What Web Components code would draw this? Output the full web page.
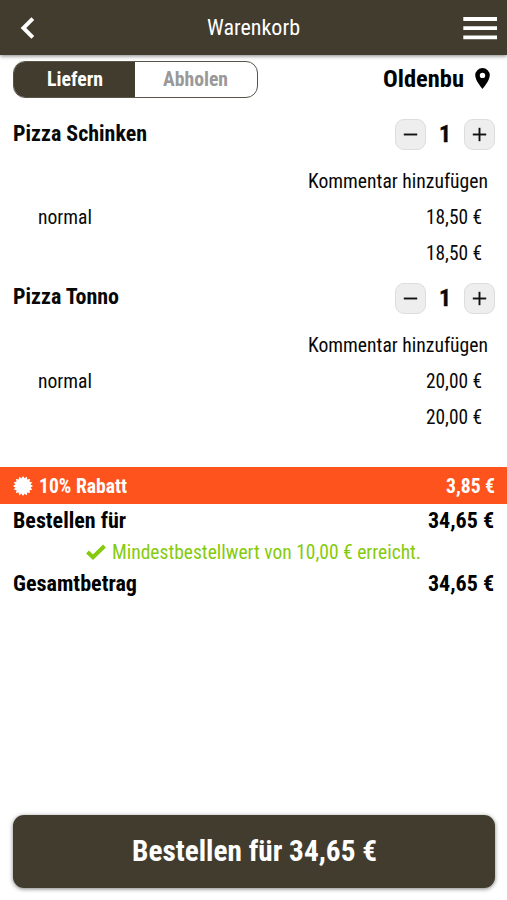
<!DOCTYPE html>
<html lang="de">
<head>
<meta charset="utf-8">
<title>Warenkorb</title>
<style>
html,body{margin:0;height:100%;background:#fff}
body{font-family:"Roboto Condensed",Roboto,"Liberation Sans",sans-serif;font-stretch:75%;color:#080808}
</style>
</head>
<body>
<cart-page></cart-page>
<script>
const define = (name, html, setup) => customElements.define(name, class extends HTMLElement {
  connectedCallback() {
    if (this.shadowRoot) return;
    const root = this.attachShadow({mode: 'open'});
    const t = document.createElement('template');
    t.innerHTML = html;
    root.append(t.content.cloneNode(true));
    if (setup) setup(this, root);
  }
});

/* Condensed label: w = set width, s = font size */
define('fit-text', `
<style>
:host{display:flex;flex:none;line-height:1.2;white-space:nowrap}
:host([b]){font-weight:700}
span{display:block;flex:none;transform-origin:0 50%}
</style><span><slot></slot></span>`, (el, root) => {
  const span = root.querySelector('span'), w = +el.getAttribute('w');
  el.style.fontSize = el.getAttribute('s') + 'px';
  el.style.width = w + 'px';
  const natural = span.getBoundingClientRect().width;
  if (natural) span.style.transform = 'scaleX(' + w / natural + ')';
});

define('app-header', `
<style>
:host{display:flex;flex:none;height:54.5px;box-sizing:border-box;padding:1px 10px 0 20px;background:#413c2e;color:#fff;align-items:center;justify-content:space-between;box-shadow:0 1px 4px rgba(0,0,0,.5)}
svg{display:block}
.title{padding-left:8px}
</style>
<svg width="16" height="24" viewBox="0 0 16 24"><path d="M12.8 2.6 3.4 12l9.4 9.4" fill="none" stroke="#fff" stroke-width="3.9"/></svg>
<div class="title"><fit-text w="93" s="22.5">Warenkorb</fit-text></div>
<svg width="34" height="24" viewBox="0 0 34 24"><path d="M.3 3h33.7M.3 12.2h33.7M.3 21.3h33.7" stroke="#fff" stroke-width="3.8"/></svg>`);

define('mode-switch', `
<style>
:host{display:flex;box-sizing:border-box;width:244.5px;height:37px;border:1px solid #58544a;border-radius:12px;overflow:hidden}
div{flex:1;display:flex;align-items:center;justify-content:center}
.on{background:#413c2e;color:#fff}.off{color:#999}
</style>
<div class="on"><fit-text b w="56" s="20">Liefern</fit-text></div><div class="off"><fit-text b w="65" s="20">Abholen</fit-text></div>`);

define('top-row', `
<style>
:host{display:flex;align-items:center;justify-content:space-between;padding:6px 17px 0 13px;height:37px}
.loc{display:flex;align-items:center;gap:11px;color:#000}
svg{display:block}
</style>
<mode-switch></mode-switch>
<div class="loc"><fit-text b w="81" s="24.5">Oldenbu</fit-text>
<svg width="15" height="21" viewBox="0 0 15 21"><path fill-rule="evenodd" d="M7.5 0A7.3 7.3 0 0 0 .2 7.3C.2 12.6 7.5 21 7.5 21s7.3-8.4 7.3-13.7A7.3 7.3 0 0 0 7.5 0Zm0 4.7a2.7 2.7 0 1 1 0 5.4 2.7 2.7 0 0 1 0-5.4Z"/></svg></div>`);

define('qty-button', `
<style>
:host{display:flex;box-sizing:border-box;width:31px;height:31px;border:1px solid #ddd;border-radius:9px;background:#eee;align-items:center;justify-content:center}
svg{display:block}
:host([minus]) .v{display:none}
</style>
<svg width="15" height="15" viewBox="0 0 15 15" stroke="#111" stroke-width="1.9"><path d="M.8 7.5h13.4"/><path class="v" d="M7.5 .8v13.4"/></svg>`);

define('cart-item', `
<style>
:host{display:flex;flex-direction:column;box-sizing:border-box;height:163.5px;padding:0 12px 0 13px}
div{display:flex;flex:none;height:36px;align-items:center;justify-content:space-between}
.qty{gap:13px;padding-right:.4px}
.comment{justify-content:flex-end;margin-top:10.5px;padding-right:7.4px}
.line{padding:0 12.6px 0 24.5px;margin-top:.4px}
.sum{justify-content:flex-end;padding-right:12.6px;height:35.4px}
</style>
<div class="head"><slot name="name"></slot><div class="qty"><qty-button minus></qty-button><fit-text b w="12" s="24" style="-webkit-text-stroke:.4px">1</fit-text><qty-button></qty-button></div></div>
<div class="comment"><fit-text w="180" s="20">Kommentar hinzufügen</fit-text></div>
<div class="line"><fit-text w="54" s="20">normal</fit-text><slot name="price"></slot></div>
<div class="sum"><slot name="sum"></slot></div>`);

define('discount-bar', `
<style>
:host{display:flex;height:37px;margin-top:23.5px;box-sizing:border-box;padding:1.5px 12.5px 0 13px;background:#ff531d;color:#fff;align-items:center;justify-content:space-between}
div{display:flex;align-items:center;gap:6px}
svg{display:block;margin-top:-1px}
</style>
<div><svg width="20" height="20" viewBox="-10 -10 20 20"><polygon fill="#fff"/></svg><fit-text b w="88" s="19.5">10% Rabatt</fit-text></div>
<fit-text b w="49" s="19.5">3,85 €</fit-text>`, (el, root) => {
  const pts = [];
  for (let i = 0; i < 32; i++) {
    const r = i % 2 ? 7.8 : 10, a = i * Math.PI / 16;
    pts.push((r * Math.sin(a)).toFixed(2) + ',' + (-r * Math.cos(a)).toFixed(2));
  }
  root.querySelector('polygon').setAttribute('points', pts.join(' '));
});

define('total-row', `
<style>:host{display:flex;height:31px;padding:0 12.8px 0 13px;align-items:center;justify-content:space-between;color:#000}</style>
<slot></slot><fit-text b w="66" s="22.5">34,65 €</fit-text>`);

define('minimum-note', `
<style>
:host{display:flex;height:31.5px;align-items:center;justify-content:center;gap:6px;color:#85cb0c}
svg{display:block}
</style>
<svg width="20" height="16" viewBox="0 0 20 16"><path d="M1.5 8 7 13.2 18.5 2" fill="none" stroke="#85cb0c" stroke-width="4"/></svg>
<fit-text w="309" s="20">Mindestbestellwert von 10,00 € erreicht.</fit-text>`);

define('order-button', `
<style>:host{display:flex;flex:none;box-sizing:border-box;height:73px;padding:1.5px 0 0 0;margin:auto 12px 12.5px 13px;border-radius:11px;background:#413c2e;color:#fff;align-items:center;justify-content:center;box-shadow:0 1px 4px rgba(0,0,0,.5)}</style>
<fit-text b w="245" s="29.5">Bestellen für 34,65 €</fit-text>`);

define('cart-page', `
<style>
:host{display:flex;flex-direction:column;height:900px;width:507px;overflow:hidden}
.items{padding-top:19px}
.totals{padding-top:1px}
</style>
<app-header></app-header>
<top-row></top-row>
<div class="items">
<cart-item><fit-text slot="name" b w="134" s="22.5" style="padding-bottom:3px">Pizza Schinken</fit-text><fit-text slot="price" w="56" s="20">18,50 €</fit-text><fit-text slot="sum" w="56" s="20">18,50 €</fit-text></cart-item>
<cart-item><fit-text slot="name" b w="106" s="22.5" style="padding-bottom:3px">Pizza Tonno</fit-text><fit-text slot="price" w="56" s="20">20,00 €</fit-text><fit-text slot="sum" w="56" s="20">20,00 €</fit-text></cart-item>
</div>
<discount-bar></discount-bar>
<div class="totals">
<total-row><fit-text b w="113" s="22.5">Bestellen für</fit-text></total-row>
<minimum-note></minimum-note>
<total-row><fit-text b w="124" s="22.5">Gesamtbetrag</fit-text></total-row>
</div>
<order-button></order-button>`);
</script>
</body>
</html>
